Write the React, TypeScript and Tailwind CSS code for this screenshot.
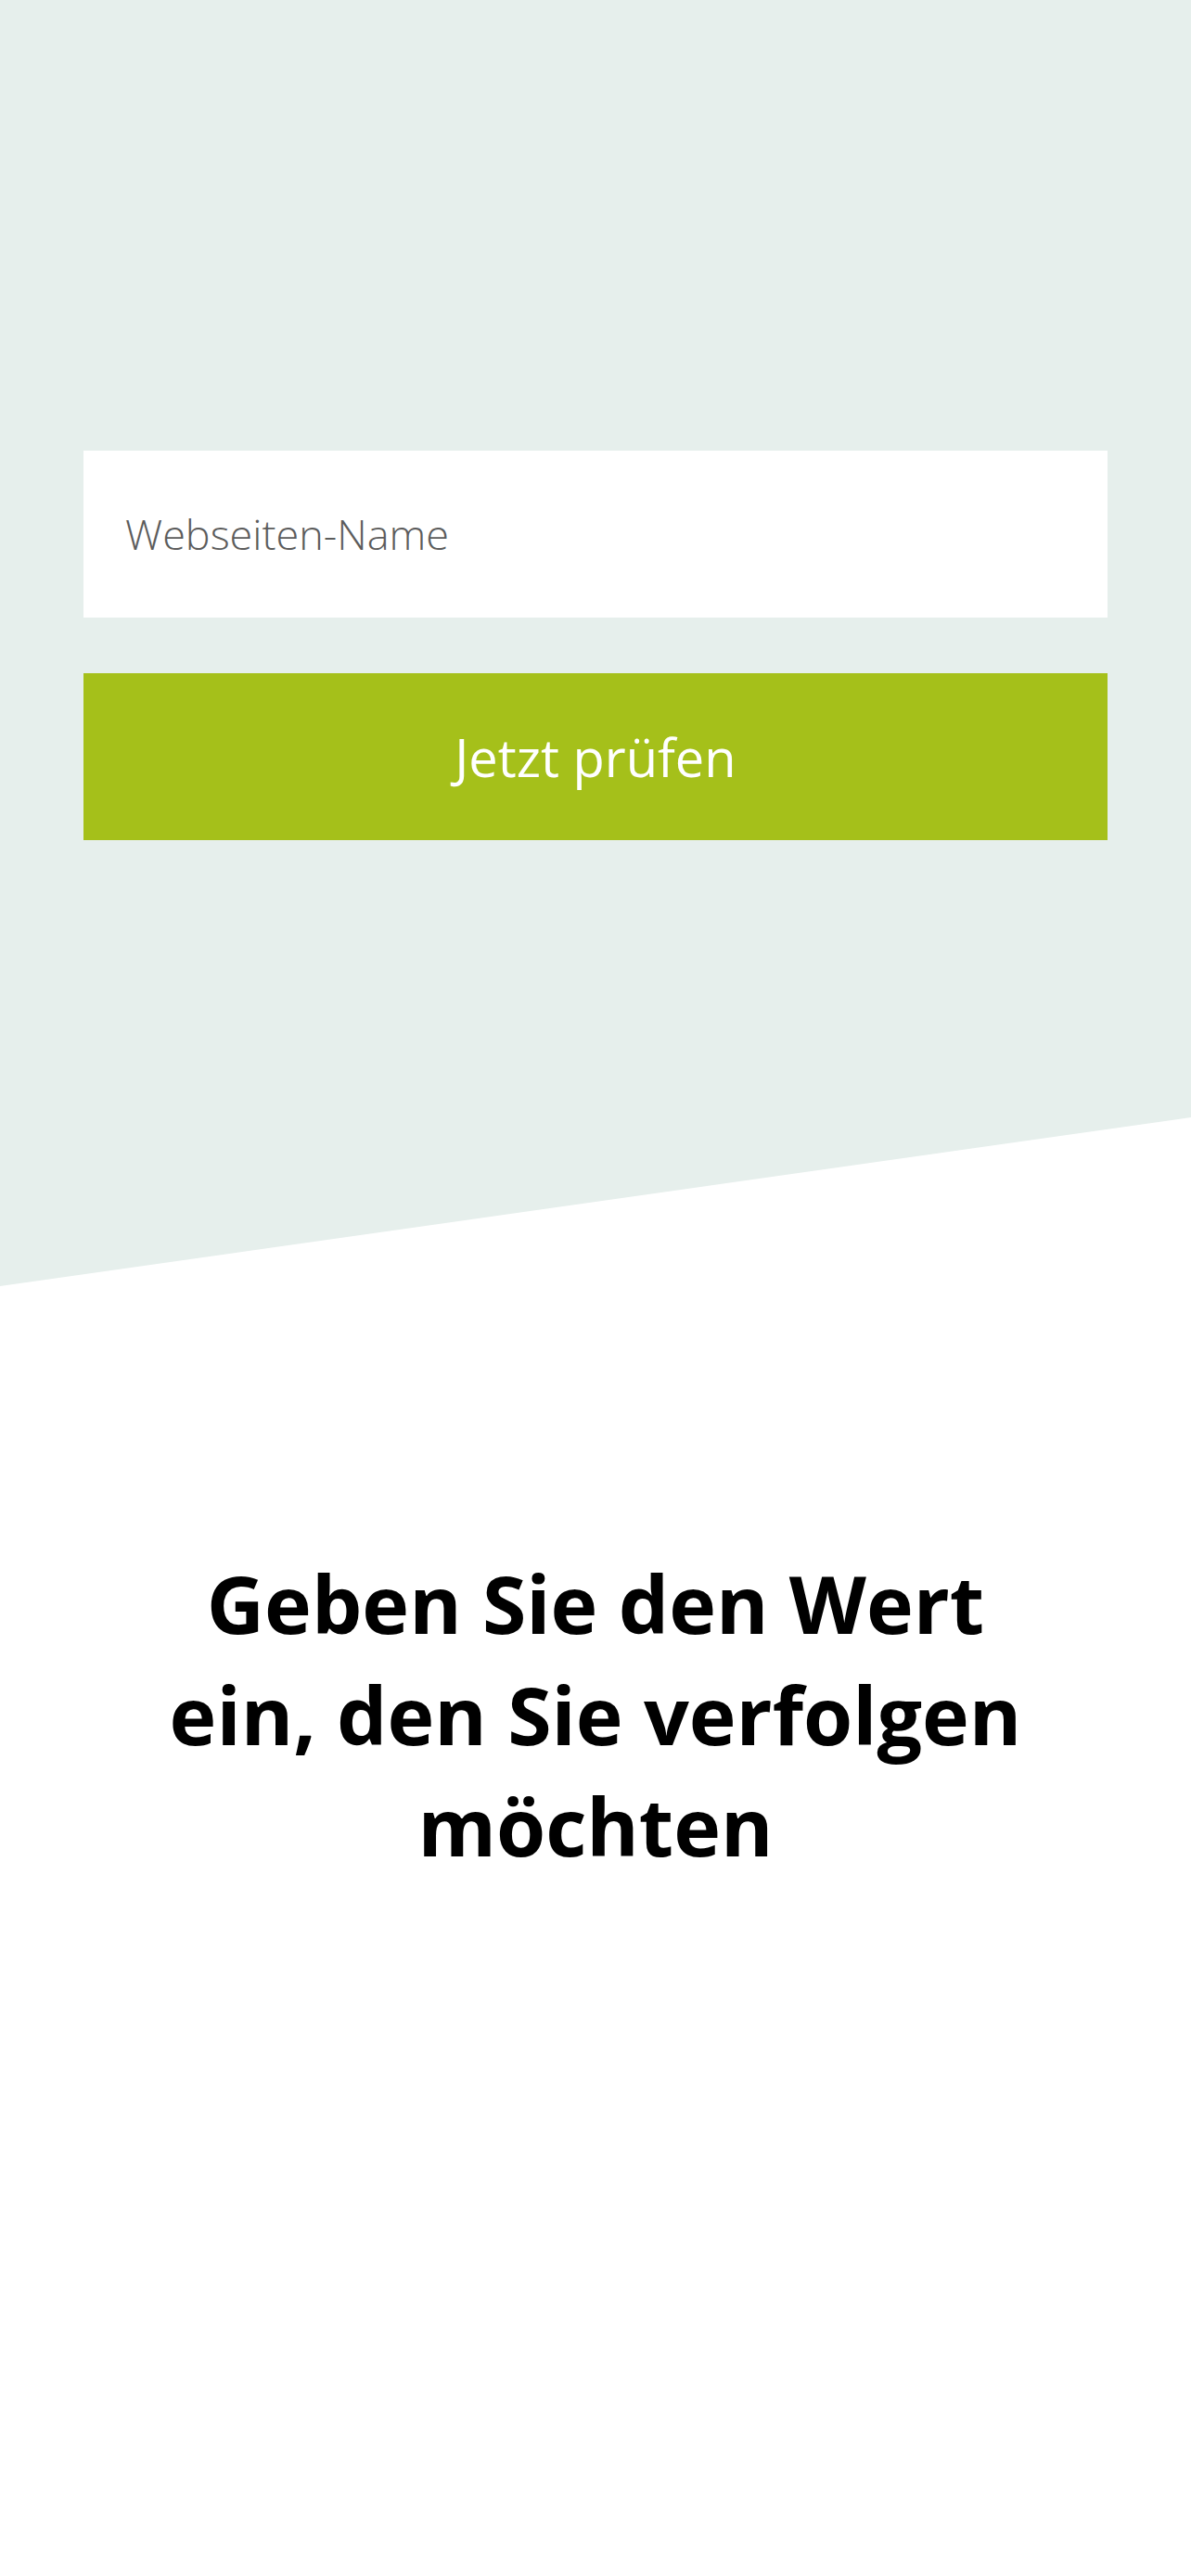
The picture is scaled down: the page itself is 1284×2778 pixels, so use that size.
import React from "react";

export default function App() {
  return (
    <div className="w-[1284px] min-h-[2778px] bg-white" style={{ fontFamily: '"Open Sans", "Noto Sans", sans-serif' }}>
      <section className="relative h-[1387px] bg-[#e6efec] [clip-path:polygon(0_0,100%_0,100%_1205px,0_1387px)] px-[90px] pt-[486px]">
        <div className="h-[180px] bg-white flex items-center px-[45px]">
          <input
            type="text"
            placeholder="Webseiten-Name"
            className="w-full bg-transparent outline-none text-[45px] font-light text-[#333] placeholder:text-[#5c5c5c]"
            style={{ fontFamily: '"Open Sans", sans-serif' }}
          />
        </div>
        <button className="mt-[60px] w-full h-[180px] bg-[#a5c01a] text-white text-[56px] font-normal flex items-center justify-center">
          Jetzt prüfen
        </button>
      </section>
      <section className="flex justify-center pt-[282px]">
        <h1 className="w-[1000px] text-center text-[86px] leading-[120px] font-bold text-black">
          Geben Sie den Wert ein, den Sie verfolgen möchten
        </h1>
      </section>
    </div>
  );
}
